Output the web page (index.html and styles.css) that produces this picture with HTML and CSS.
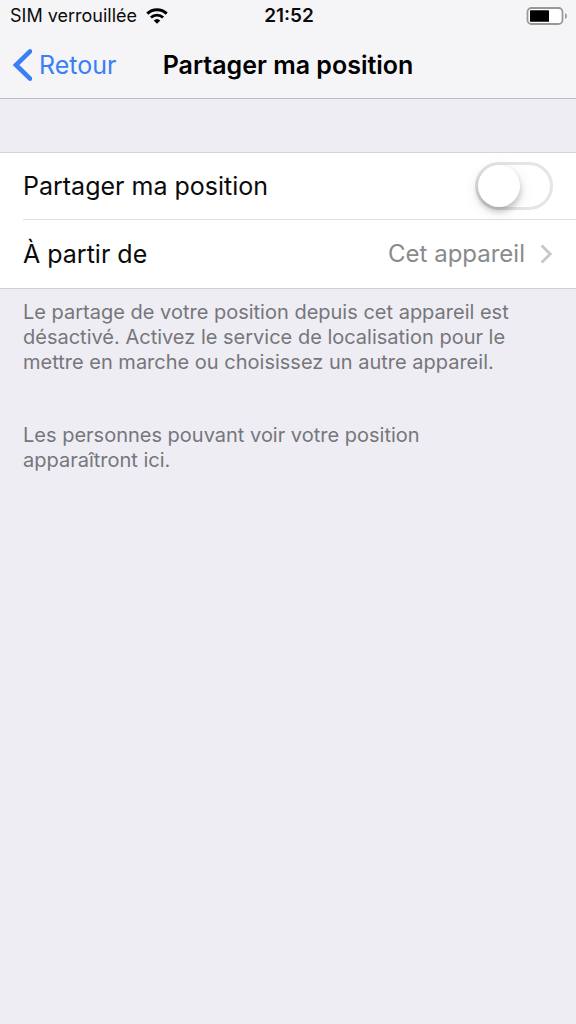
FILE: index.html
```html
<!DOCTYPE html>
<html lang="fr">
<head>
<meta charset="utf-8">
<meta name="viewport" content="width=device-width, initial-scale=1">
<title>Partager ma position</title>
<link rel="stylesheet" href="styles.css">
</head>
<body>
<header class="top">
  <div class="status">
    <div class="carrier">
      <span>SIM verrouillée</span>
      <svg class="wifi" viewBox="0 0 22 16" aria-hidden="true">
        <path d="M1.3 5.7a14 14 0 0 1 19.4 0" fill="none" stroke="#000" stroke-width="3"/>
        <path d="M4.9 9.5a8.9 8.9 0 0 1 12.2 0" fill="none" stroke="#000" stroke-width="2.8"/>
        <path d="M7.7 12.4a4.9 4.9 0 0 1 6.6 0L11 15.7z"/>
      </svg>
    </div>
    <time class="clock">21:52</time>
    <svg class="battery" viewBox="0 0 42 18" aria-hidden="true">
      <rect x="1.5" y="1" width="35" height="16" rx="4" fill="#fff" stroke="#98989a" stroke-width="1.8"/>
      <rect x="4" y="3.2" width="19" height="11.6" rx=".6"/>
      <path d="M39 6.2c2.6.8 2.6 4.8 0 5.6z" fill="#98989a"/>
    </svg>
  </div>
  <nav class="nav">
    <a class="back" href="#">
      <svg class="back-icon" viewBox="0 0 20 34" aria-hidden="true"><path d="M18 3.4 4 17l14 13.6" fill="none" stroke="#3a7ff6" stroke-width="4.6" stroke-linecap="round"/></svg>
      <span>Retour</span>
    </a>
    <h1 class="title">Partager ma position</h1>
  </nav>
</header>
<main class="content">
  <div class="list">
    <div class="row">
      <label for="share">Partager ma position</label>
      <input class="switch" id="share" type="checkbox" role="switch">
    </div>
    <a class="row row-link" href="#">
      <span>À partir de</span>
      <span class="value">Cet appareil</span>
      <svg class="chevron" viewBox="0 0 14 22" aria-hidden="true"><path d="m2.6 2.4 8.6 8.6-8.6 8.6" fill="none" stroke="#c7c7cc" stroke-width="2.8"/></svg>
    </a>
  </div>
  <p class="note">Le partage de votre position depuis cet appareil est désactivé. Activez le service de localisation pour le mettre en marche ou choisissez un autre appareil.</p>
  <p class="note">Les personnes pouvant voir votre position<br>apparaîtront ici.</p>
</main>
</body>
</html>
```
FILE: styles.css
```css
* {
  box-sizing: border-box;
}

body {
  margin: 0;
  min-height: 100vh;
  background: #eeedf3;
  color: #0b0b0b;
  font-family: Inter, "Liberation Sans", sans-serif;
  font-size: 25px;
  line-height: 32px;
}

a {
  color: inherit;
  text-decoration: none;
}

.top {
  background: #f5f5f7;
  border-bottom: 1px solid #bcbcc0;
}

.status {
  display: grid;
  grid-template-columns: 1fr auto 1fr;
  align-items: center;
  height: 32px;
  padding: 0 8px 0 10px;
  font-size: 18px;
}

.carrier {
  display: flex;
  align-items: center;
  gap: 9px;
  white-space: nowrap;
}

.wifi {
  width: 22px;
  height: 16px;
}

.clock {
  font-size: 19px;
  font-weight: 600;
}

.battery {
  justify-self: end;
  width: 42px;
  height: 18px;
}

.nav {
  display: grid;
  grid-template-columns: 1fr auto 1fr;
  align-items: center;
  height: 66px;
  padding: 0 12px;
}

.back {
  display: flex;
  align-items: center;
  gap: 7px;
  color: #3a7ff6;
}

.back-icon {
  width: 20px;
  height: 34px;
}

.title {
  margin: 0;
  color: #000;
  font-size: 25px;
  font-weight: 600;
}

.content {
  padding-top: 53px;
}

.list {
  padding-left: 23px;
  background: #fff;
  border-top: 1px solid #d3d3d6;
  border-bottom: 1px solid #d0d0d3;
}

.row {
  display: flex;
  align-items: center;
  justify-content: space-between;
  height: 66px;
  padding-right: 23px;
}

.row-link {
  height: 69px;
  border-top: 1px solid #dedee0;
}

.value {
  margin-left: auto;
  margin-right: 14px;
  color: #8a8a8c;
  font-size: 24px;
}

.chevron {
  width: 14px;
  height: 22px;
}

.switch {
  display: flex;
  align-items: center;
  appearance: none;
  width: 78px;
  height: 48px;
  margin: 0;
  border: 3px solid #e5e5e5;
  border-radius: 24px;
  background: #fff;
}

.switch::before {
  content: "";
  width: 42px;
  height: 42px;
  border-radius: 50%;
  background: #fff;
  box-shadow: 0 4px 6px rgba(0, 0, 0, 0.22), 0 4px 16px rgba(0, 0, 0, 0.1);
}

.switch:checked {
  justify-content: flex-end;
  border-color: #4cd964;
  background: #4cd964;
}

.note {
  margin: 0 0 48px;
  padding: 11px 64px 0 23px;
  color: #76767b;
  font-size: 20px;
  line-height: 25px;
}

.note + .note {
  padding-top: 0;
}
```
